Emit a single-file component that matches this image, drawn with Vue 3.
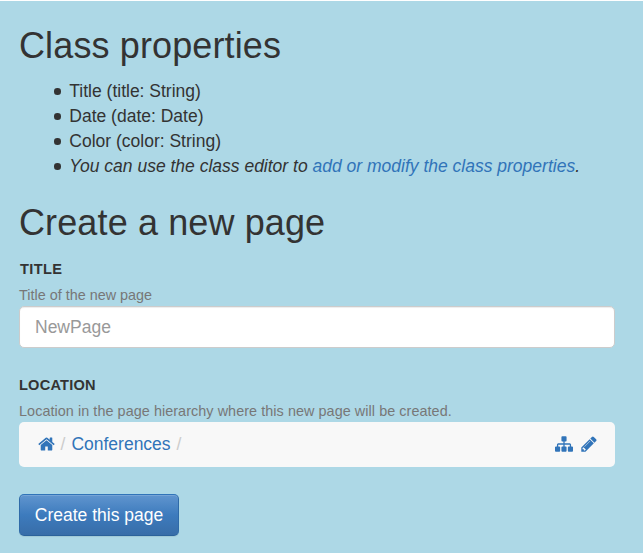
<script setup>
const properties = ['Title (title: String)', 'Date (date: Date)', 'Color (color: String)']
</script>

<template>
  <main class="page">
    <h1 class="heading">Class properties</h1>
    <ul class="properties">
      <li v-for="property in properties" :key="property">{{ property }}</li>
      <li><em>You can use the class editor to <a href="#">add or modify the class properties</a>.</em></li>
    </ul>
    <h1 class="heading">Create a new page</h1>
    <form class="form" @submit.prevent>
      <label class="label label-title" for="title">TITLE</label>
      <span class="hint">Title of the new page</span>
      <input id="title" class="input" type="text" placeholder="NewPage" />
      <span class="label label-location">LOCATION</span>
      <span class="hint hint-location">Location in the page hierarchy where this new page will be created.</span>
      <div class="breadcrumb">
        <a href="#" class="icon-link" aria-label="Home">
          <svg class="icon home" viewBox="0 0 1664 1792"><path d="M1408 992v480q0 26-19 45t-45 19h-384v-384h-256v384h-384q-26 0-45-19t-19-45v-480q0-1 .5-3t.5-3l575-474 575 474q1 2 1 6zm223-69l-62 74q-8 9-21 11h-3q-13 0-21-7l-692-577-692 577q-12 8-24 7-13-2-21-11l-62-74q-8-10-7-23.5t11-21.5l719-599q32-26 76-26t76 26l244 204v-195q0-14 9-23t23-9h192q14 0 23 9t9 23v408l219 182q10 8 11 21.5t-7 23.5z" /></svg>
        </a>
        <span class="separator">/</span>
        <a href="#">Conferences</a>
        <span class="separator">/</span>
        <span class="tools">
          <a href="#" class="icon-link" aria-label="Tree">
            <svg class="icon tree" viewBox="0 0 1792 1792"><path d="M1792 1248v320q0 40-28 68t-68 28h-320q-40 0-68-28t-28-68v-320q0-40 28-68t68-28h96v-192h-512v192h96q40 0 68 28t28 68v320q0 40-28 68t-68 28h-320q-40 0-68-28t-28-68v-320q0-40 28-68t68-28h96v-192h-512v192h96q40 0 68 28t28 68v320q0 40-28 68t-68 28h-320q-40 0-68-28t-28-68v-320q0-40 28-68t68-28h96v-192q0-52 38-90t90-38h512v-192h-96q-40 0-68-28t-28-68v-320q0-40 28-68t68-28h320q40 0 68 28t28 68v320q0 40-28 68t-68 28h-96v192h512q52 0 90 38t38 90v192h96q40 0 68 28t28 68z" /></svg>
          </a>
          <a href="#" class="icon-link" aria-label="Edit">
            <svg class="icon pencil" viewBox="128 0 1536 1792"><path d="M491 1536l91-91-235-235-91 91v107h128v128h107zm523-928q0-22-22-22-10 0-17 7l-542 542q-7 7-7 17 0 22 22 22 10 0 17-7l542-542q7-7 7-17zm-54-192l416 416-832 832h-416v-416zm683 96q0 53-37 90l-166 166-416-416 166-165q36-38 90-38 53 0 91 38l235 234q37 39 37 91z" /></svg>
          </a>
        </span>
      </div>
      <button class="button" type="submit">Create this page</button>
    </form>
  </main>
</template>

<style>
body {
  background: #add8e6;
}
</style>

<style scoped>
.page {
  box-sizing: border-box;
  height: 553px;
  overflow: hidden;
  padding: 24px 28px 0 19px;
  border-top: 1px solid #fff;
  color: #333;
  font: 17.5px/25px "Liberation Sans", Arial, sans-serif;
}
.heading {
  margin: 0;
  font-size: 36px;
  font-weight: 400;
  letter-spacing: 0.12px;
  line-height: 41px;
}
.properties {
  margin: 13px 0 23px;
  padding-left: 35px;
  list-style: none;
}
.properties li {
  display: flex;
  align-items: center;
}
.properties li::before {
  content: "";
  width: 6.6px;
  height: 6.6px;
  margin-right: 8.7px;
  border-radius: 50%;
  background: #333;
}
a {
  color: #3174b9;
  text-decoration: none;
}
.form {
  display: flex;
  flex-direction: column;
  align-items: flex-start;
}
.label {
  font-size: 14.6px;
  font-weight: 700;
  letter-spacing: 0.2px;
  line-height: 21px;
}
.label-title {
  margin-top: 16px;
  padding-left: 1px;
  letter-spacing: 0.35px;
}
.label-location {
  margin-top: 27px;
}
.hint {
  margin-top: 5px;
  color: #777;
  font-size: 14.4px;
  line-height: 21px;
}
.hint-location {
  letter-spacing: 0.06px;
}
.input {
  box-sizing: border-box;
  width: 596px;
  height: 42px;
  margin: 0;
  padding: 0 15px;
  border: 1px solid #ccc;
  border-radius: 5px;
  background: #fff;
  box-shadow: inset 0 1px 1px rgba(0, 0, 0, 0.075);
  color: #555;
  font: inherit;
}
.input::placeholder {
  color: #999;
  opacity: 1;
}
.breadcrumb {
  box-sizing: border-box;
  display: flex;
  align-items: center;
  width: 596px;
  height: 45px;
  padding: 0 18.5px 1px;
  border-radius: 5px;
  background: #f8f8f8;
}
.icon-link {
  display: flex;
}
.icon {
  height: 18px;
  fill: currentColor;
}
.home {
  width: 17px;
}
.tree {
  width: 18px;
}
.pencil {
  width: 16px;
}
.separator {
  padding: 0 6px;
  color: #ccc;
}
.tools {
  display: flex;
  gap: 8px;
  margin-left: auto;
}
.button {
  box-sizing: border-box;
  width: 160px;
  height: 42px;
  margin: 27px 0 0;
  padding: 0;
  border: 1px solid;
  border-color: #3174b9 #2f6aa8 #2b629b;
  border-radius: 5px;
  background: linear-gradient(#6095cf, #3d7bbd 50%, #386da8);
  box-shadow: inset 0 1px 0 rgba(255, 255, 255, 0.15), 0 1px 1px rgba(0, 0, 0, 0.075);
  color: #fff;
  font: inherit;
}
</style>
